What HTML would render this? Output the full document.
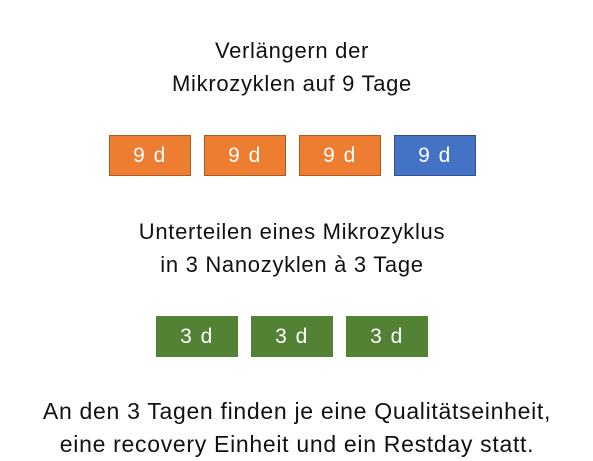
<!DOCTYPE html>
<html><head><meta charset="utf-8"><style>
body{margin:0;width:593px;height:450px;background:#fff;position:relative;overflow:hidden;font-family:"Liberation Sans",sans-serif;color:#111}
.t{position:absolute;left:0;width:584px;text-align:center;white-space:nowrap}
.b{position:absolute;width:80px;height:39px;color:#fff;font-size:21px;line-height:39px;text-align:center;letter-spacing:1.5px}
.o{background:#ED7D31;border:1px solid #ae5a21}
.bl{background:#4472C4;border:1px solid #2f528f}
.g{background:#548235;border:1px solid #548235}
</style></head><body>
<div class="t" style="top:34px;font-size:22px;line-height:33px;letter-spacing:0.7px">Verlängern der<br>Mikrozyklen auf 9 Tage</div>
<div class="b o" style="left:109px;top:135px">9 d</div>
<div class="b o" style="left:204px;top:135px">9 d</div>
<div class="b o" style="left:299px;top:135px">9 d</div>
<div class="b bl" style="left:394px;top:135px">9 d</div>
<div class="t" style="top:215px;font-size:22px;line-height:33px;letter-spacing:0.7px">Unterteilen eines Mikrozyklus<br>in 3 Nanozyklen à 3 Tage</div>
<div class="b g" style="left:156px;top:316px">3 d</div>
<div class="b g" style="left:251px;top:316px">3 d</div>
<div class="b g" style="left:346px;top:316px">3 d</div>
<div class="t" style="top:395px;left:5px;font-size:23px;line-height:33px;letter-spacing:0.7px">An den 3 Tagen finden je eine Qualitätseinheit,<br>eine recovery Einheit und ein Restday statt.</div>
</body></html>
